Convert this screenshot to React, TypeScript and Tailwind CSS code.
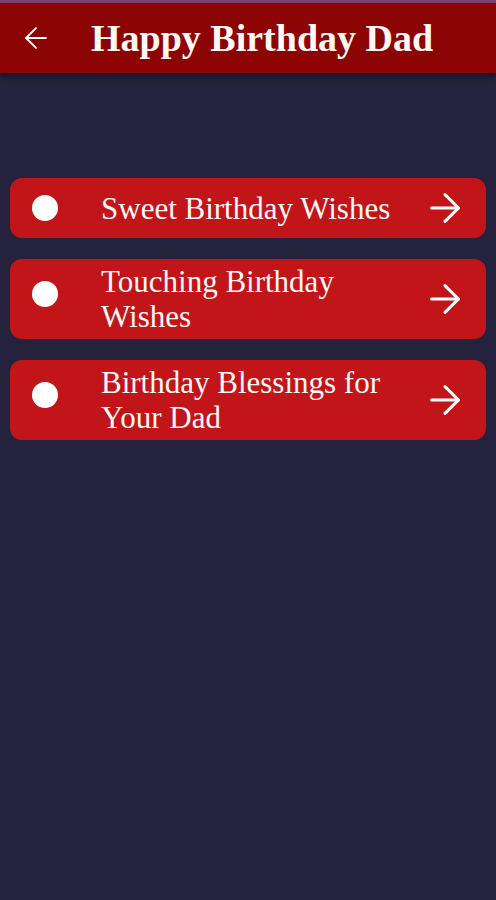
import React from 'react'
import { ArrowLeft, ArrowRight } from 'lucide-react'

const topics = [
  { title: 'Sweet Birthday Wishes', twoLine: false },
  { title: 'Touching Birthday Wishes', twoLine: true },
  { title: 'Birthday Blessings for Your Dad', twoLine: true },
]

const serif = { fontFamily: '"Liberation Serif", "DejaVu Serif", serif' }

export default function App() {
  return (
    <div className="flex flex-col min-h-screen bg-[#24223d]" style={serif}>
      {/* status strip */}
      <div className="h-[3px] bg-[#7e4373]" />

      {/* Header */}
      <header className="relative z-10 flex items-center h-[70px] gap-[38px] pl-[19px] bg-[#8c0404] shadow-[0_3px_6px_rgba(0,0,0,0.45)]">
        <ArrowLeft size={34} strokeWidth={1.3} className="text-white shrink-0" />
        <h1 className="text-[38px] leading-none font-bold text-[#fff8f5] pb-[1px]">
          Happy Birthday Dad
        </h1>
      </header>

      {/* List */}
      <main className="flex flex-col gap-[21px] px-[10px] pt-[105px]">
        {topics.map(({ title, twoLine }) => (
          <button
            key={title}
            className="flex items-center min-h-[60px] py-[5px] pl-[22px] pr-[18px] rounded-xl bg-[#c2151a] text-left"
          >
            <span
              className={`w-[26px] h-[26px] mr-[43px] rounded-full bg-white shrink-0 ${
                twoLine ? 'mb-[10px]' : ''
              }`}
            />
            <span className="flex-1 pr-2 text-[31px] leading-[35px] text-[#fff8f5]">{title}</span>
            <ArrowRight size={46} strokeWidth={1.6} className="text-white shrink-0" />
          </button>
        ))}
      </main>
    </div>
  )
}
